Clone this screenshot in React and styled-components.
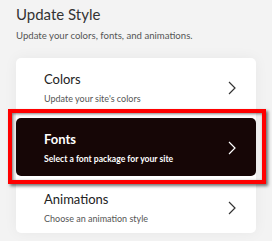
import React from "react";
import styled, { createGlobalStyle } from "styled-components";

const Global = createGlobalStyle`
  html, body { margin: 0; padding: 0; }
  body {
    background: #f3f3f3;
    font-family: Lato, "Open Sans", sans-serif;
  }
`;

const Page = styled.div`
  width: 272px;
  height: 241px;
  box-sizing: border-box;
  padding: 4px 16px 0;
  overflow: hidden;
`;

const Title = styled.h1`
  margin: 0;
  font-size: 15px;
  font-weight: 400;
  color: #333;
  line-height: 20px;
`;

const Sub = styled.p`
  margin: 5px 0 0;
  font-size: 9.6px;
  color: #555;
  line-height: 14px;
`;

const Card = styled.div`
  margin-top: 15px;
  background: #fff;
  border-radius: 5px;
  box-shadow: 0 0 14px rgba(0, 0, 0, 0.05);
`;

const Row = styled.div`
  display: flex;
  align-items: center;
  justify-content: space-between;
  padding: ${(p) => p.pad};
  border-radius: 5px;
  background: ${(p) => (p.dark ? "#160606" : "transparent")};
  color: ${(p) => (p.dark ? "#fff" : "#222")};
`;

const Text = styled.div`
  display: flex;
  flex-direction: column;
`;

const Name = styled.div`
  font-size: 13px;
  font-weight: ${(p) => (p.dark ? 700 : 400)};
  line-height: 18px;
`;

const Desc = styled.div`
  margin-top: 5px;
  font-size: ${(p) => (p.dark ? "8.6px" : "9px")};
  font-weight: ${(p) => (p.dark ? 700 : 400)};
  line-height: 12px;
  color: ${(p) => (p.dark ? "#fff" : "#555")};
`;

const Highlight = styled.div`
  margin: 0 -10px 0 -8px;
  padding: 5px 6px 4px 4px;
  border: 4px solid #f00;
  box-shadow: 2px 2px 3px rgba(0, 0, 0, 0.55),
    inset 1px 1px 3px rgba(0, 0, 0, 0.5);
`;

const Chevron = ({ color }) => (
  <svg width="8" height="14" viewBox="0 0 8 14" fill="none">
    <path d="M1 1 L7 7 L1 13" stroke={color} strokeWidth="1.2" />
  </svg>
);

const items = [
  { name: "Colors", desc: "Update your site's colors", pad: "12px 20px 4px 28px" },
  { name: "Fonts", desc: "Select a font package for your site", active: true, pad: "12px 20px 11px 28px" },
  { name: "Animations", desc: "Choose an animation style", pad: "6px 20px 8px 28px" },
];

export default function App() {
  return (
    <Page>
      <Global />
      <Title>Update Style</Title>
      <Sub>Update your colors, fonts, and animations.</Sub>
      <Card>
        {items.map((it) =>
          it.active ? (
            <Highlight key={it.name}>
              <Row dark pad={it.pad}>
                <Text>
                  <Name dark>{it.name}</Name>
                  <Desc dark>{it.desc}</Desc>
                </Text>
                <Chevron color="#fff" />
              </Row>
            </Highlight>
          ) : (
            <Row key={it.name} pad={it.pad}>
              <Text>
                <Name>{it.name}</Name>
                <Desc>{it.desc}</Desc>
              </Text>
              <Chevron color="#333" />
            </Row>
          )
        )}
      </Card>
    </Page>
  );
}
